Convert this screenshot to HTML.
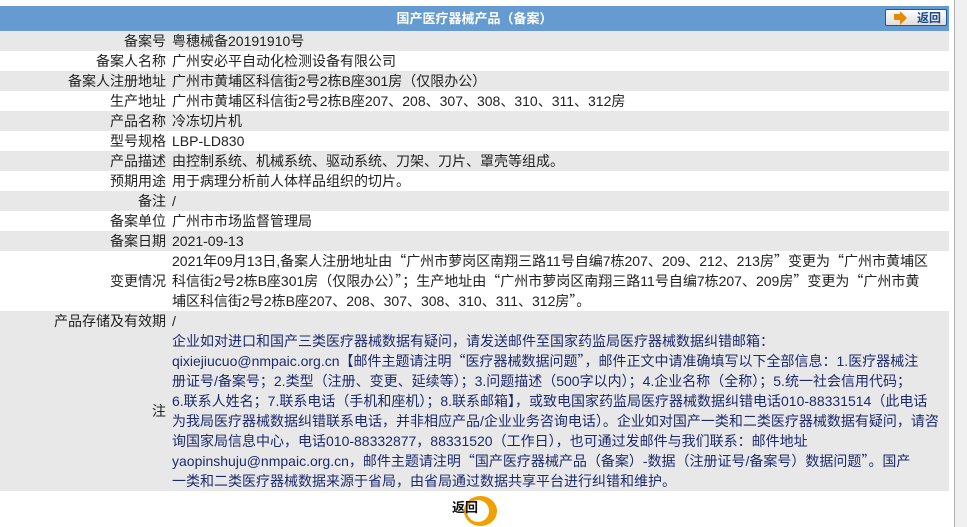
<!DOCTYPE html>
<html><head><meta charset="utf-8"><style>
body{margin:0;background:#fff;width:967px;height:527px;overflow:hidden;position:relative;font-family:"Liberation Sans","Noto Sans CJK SC",sans-serif;font-size:14px;color:#222}
.q{font-family:"Noto Sans CJK SC",sans-serif}
.sb{position:absolute;left:954px;top:0;width:13px;height:527px;background:#f0f0f0;border-left:1px solid #b0b0b0}
table{position:absolute;left:0;top:6px;width:949px;border-collapse:collapse}
td{padding:0;line-height:20px;height:20px;vertical-align:middle;white-space:nowrap}
td.l{width:166px;text-align:right;padding-right:6px}
td.v{padding-left:0}
tr.g{background:#e8e8e8}
.h td{background:#659bd0;height:25px;color:#fff;font-weight:bold;font-size:13px;text-align:center;position:relative}
.btn{position:absolute;right:2px;top:3px;width:62px;height:17px;border:1px solid #1a5a9a;border-radius:2px;background:linear-gradient(#fff,#ddd);color:#1a4a8a;font-size:12px;line-height:17px;text-align:right;padding-right:5px;box-sizing:border-box}
.btn i{position:absolute;left:8px;top:4px;width:6px;height:6px;background:#e88a00}
.btn b{position:absolute;left:14px;top:1px;border-left:7px solid #e88a00;border-top:7px solid transparent;border-bottom:7px solid transparent}
.n{color:#1e2a6e}
.bot{position:absolute;left:452px;top:497px;font-weight:bold;font-size:13px;color:#111}
.ring{position:absolute;left:464px;top:496px;width:33px;height:30px;border-radius:50%;background:#f0a000;}
.ring2{position:absolute;left:467px;top:500px;width:22px;height:22px;border-radius:50%;background:#fff}
</style></head><body>
<div class="sb"></div>
<table>
<tr class="h"><td colspan="2">国产医疗器械产品（备案）<span class="btn"><i></i><b></b>返回</span></td></tr>
<tr class="g"><td class="l">备案号</td><td class="v">粤穗械备20191910号</td></tr>
<tr><td class="l">备案人名称</td><td class="v">广州安必平自动化检测设备有限公司</td></tr>
<tr class="g"><td class="l">备案人注册地址</td><td class="v">广州市黄埔区科信街2号2栋B座301房（仅限办公）</td></tr>
<tr><td class="l">生产地址</td><td class="v">广州市黄埔区科信街2号2栋B座207、208、307、308、310、311、312房</td></tr>
<tr class="g"><td class="l">产品名称</td><td class="v">冷冻切片机</td></tr>
<tr><td class="l">型号规格</td><td class="v">LBP-LD830</td></tr>
<tr class="g"><td class="l">产品描述</td><td class="v">由控制系统、机械系统、驱动系统、刀架、刀片、罩壳等组成。</td></tr>
<tr><td class="l">预期用途</td><td class="v">用于病理分析前人体样品组织的切片。</td></tr>
<tr class="g"><td class="l">备注</td><td class="v">/</td></tr>
<tr><td class="l">备案单位</td><td class="v">广州市市场监督管理局</td></tr>
<tr class="g"><td class="l">备案日期</td><td class="v">2021-09-13</td></tr>
<tr><td class="l">变更情况</td><td class="v">2021年09月13日,备案人注册地址由<span class="q">“</span>广州市萝岗区南翔三路11号自编7栋207、209、212、213房<span class="q">”</span>变更为<span class="q">“</span>广州市黄埔区<br>科信街2号2栋B座301房（仅限办公）<span class="q">”</span>；生产地址由<span class="q">“</span>广州市萝岗区南翔三路11号自编7栋207、209房<span class="q">”</span>变更为<span class="q">“</span>广州市黄<br>埔区科信街2号2栋B座207、208、307、308、310、311、312房<span class="q">”</span>。</td></tr>
<tr class="g"><td class="l">产品存储及有效期</td><td class="v">/</td></tr>
<tr class="g"><td class="l">注</td><td class="v n">企业如对进口和国产三类医疗器械数据有疑问，请发送邮件至国家药监局医疗器械数据纠错邮箱：<br>qixiejiucuo@nmpaic.org.cn【邮件主题请注明<span class="q">“</span>医疗器械数据问题<span class="q">”</span>，邮件正文中请准确填写以下全部信息：1.医疗器械注<br>册证号/备案号；2.类型（注册、变更、延续等）；3.问题描述（500字以内）；4.企业名称（全称）；5.统一社会信用代码；<br>6.联系人姓名；7.联系电话（手机和座机）；8.联系邮箱】，或致电国家药监局医疗器械数据纠错电话010-88331514（此电话<br>为我局医疗器械数据纠错联系电话，并非相应产品/企业业务咨询电话）。企业如对国产一类和二类医疗器械数据有疑问，请咨<br>询国家局信息中心，电话010-88332877，88331520（工作日），也可通过发邮件与我们联系：邮件地址<br>yaopinshuju@nmpaic.org.cn，邮件主题请注明<span class="q">“</span>国产医疗器械产品（备案）-数据（注册证号/备案号）数据问题<span class="q">”</span>。国产<br>一类和二类医疗器械数据来源于省局，由省局通过数据共享平台进行纠错和维护。</td></tr>
</table>
<div class="ring"></div><div class="ring2"></div>
<div class="bot">返回</div>
</body></html>
